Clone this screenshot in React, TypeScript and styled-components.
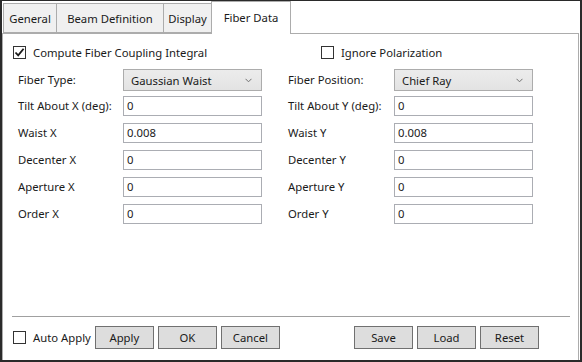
import { FC, Fragment } from "react";
import styled, { createGlobalStyle } from "styled-components";

const GlobalStyle = createGlobalStyle`
    html, body {
        margin: 0;
        padding: 0;
        background: #ffffff;
    }
    * {
        box-sizing: border-box;
    }
`

const Window = styled.div`
    width: 582px;
    height: 362px;
    border: 2px solid #2a2a2a;
    border-top-width: 1px;
    background: #ffffff;
    display: flex;
    flex-direction: column;
    font-family: "Segoe UI", "Noto Sans", sans-serif;
    font-size: 11.3px;
    color: #1a1a1a;
`

const TabStrip = styled.div`
    display: flex;
    align-items: flex-end;
    height: 32px;
    padding-left: 1px;
    position: relative;
    z-index: 1;
`

const Tab = styled.div<{ $w: number; $active?: boolean }>`
    width: ${({ $w }) => $w}px;
    height: ${({ $active }) => ($active ? '33px' : '30px')};
    margin-bottom: ${({ $active }) => ($active ? '-1px' : '0')};
    margin-left: -1px;
    display: flex;
    align-items: center;
    justify-content: center;
    padding-bottom: ${({ $active }) => ($active ? '2px' : '0')};
    border: 1px solid #acacac;
    border-bottom: ${({ $active }) => ($active ? 'none' : '1px solid #acacac')};
    background: ${({ $active }) => ($active ? '#ffffff' : '#f0f0f0')};
    color: #1a1a1a;
    &:first-child {
        margin-left: 0;
    }
`

const Panel = styled.div`
    flex: 1;
    border: 1px solid #acacac;
    border-bottom: none;
    margin-right: 1px;
    display: flex;
    flex-direction: column;
`

const CheckRow = styled.div`
    display: grid;
    grid-template-columns: 308px auto;
    padding: 9px 0 0 10px;
    height: 35px;
`

const CheckItem = styled.label`
    display: flex;
    align-items: center;
    gap: 7px;
    height: 18px;
    white-space: nowrap;
`

const Box = styled.span`
    width: 13px;
    height: 13px;
    border: 1px solid #333333;
    background: #ffffff;
    display: flex;
    align-items: center;
    justify-content: center;
    flex-shrink: 0;
`

const Fields = styled.div`
    display: flex;
    gap: 26px;
    padding-left: 15px;
`

const Column = styled.div<{ $label: number }>`
    display: grid;
    grid-template-columns: ${({ $label }) => $label}px 139px;
    grid-auto-rows: 27px;
    align-items: start;
`

const Label = styled.div<{ $h: number }>`
    height: ${({ $h }) => $h}px;
    line-height: ${({ $h }) => $h}px;
    white-space: nowrap;
`

const Input = styled.div`
    height: 20px;
    border: 1px solid #abadb3;
    background: #ffffff;
    padding-left: 3px;
    line-height: 18px;
`

const Combo = styled.div`
    height: 22px;
    border: 1px solid #acacac;
    background: linear-gradient(#ececec, #e3e3e3);
    padding: 0 9px 0 7px;
    display: flex;
    align-items: center;
    justify-content: space-between;
`

const Spacer = styled.div`
    flex: 1;
`

const Separator = styled.div`
    height: 1px;
    background: #a0a0a0;
    margin: 0 8px 0 9px;
`

const Footer = styled.div`
    display: flex;
    justify-content: space-between;
    align-items: center;
    padding: 9px 39px 11px 10px;
`

const Group = styled.div`
    display: flex;
    align-items: center;
    gap: 4px;
`

const Button = styled.div`
    width: 59px;
    height: 23px;
    flex-shrink: 0;
    border: 1px solid #707070;
    background: #dddddd;
    display: flex;
    align-items: center;
    justify-content: center;
`

const CheckBox: FC<{ checked?: boolean; text: string }> = ({ checked, text }) => (
    <CheckItem>
        <Box>
            {checked && (
                <svg width="11" height="11" viewBox="0 0 11 11">
                    <polyline points="1.5,5.5 4.2,8.4 9.6,1.8" fill="none" stroke="#1a1a1a" strokeWidth="1.8" />
                </svg>
            )}
        </Box>
        {text}
    </CheckItem>
)

const Chevron = () => (
    <svg width="7" height="5" viewBox="0 0 7 5">
        <polyline points="0.5,0.8 3.5,3.8 6.5,0.8" fill="none" stroke="#707070" strokeWidth="1" />
    </svg>
)

const leftRows = [
    ["Tilt About X (deg):", "0"],
    ["Waist X", "0.008"],
    ["Decenter X", "0"],
    ["Aperture X", "0"],
    ["Order X", "0"],
]

const rightRows = [
    ["Tilt About Y (deg):", "0"],
    ["Waist Y", "0.008"],
    ["Decenter Y", "0"],
    ["Aperture Y", "0"],
    ["Order Y", "0"],
]

const App: FC = () => {
    return (
        <>
            <GlobalStyle />
            <Window>
                <TabStrip>
                    <Tab $w={54}>General</Tab>
                    <Tab $w={108}>Beam Definition</Tab>
                    <Tab $w={49}>Display</Tab>
                    <Tab $w={80} $active>Fiber Data</Tab>
                </TabStrip>
                <Panel>
                    <CheckRow>
                        <CheckBox checked text="Compute Fiber Coupling Integral" />
                        <CheckBox text="Ignore Polarization" />
                    </CheckRow>
                    <Fields>
                        <Column $label={105}>
                            <Label $h={22}>Fiber Type:</Label>
                            <Combo>Gaussian Waist<Chevron /></Combo>
                            {leftRows.map(([label, value]) => (
                                <Fragment key={label}>
                                    <Label $h={20}>{label}</Label>
                                    <Input>{value}</Input>
                                </Fragment>
                            ))}
                        </Column>
                        <Column $label={106}>
                            <Label $h={22}>Fiber Position:</Label>
                            <Combo>Chief Ray<Chevron /></Combo>
                            {rightRows.map(([label, value]) => (
                                <Fragment key={label}>
                                    <Label $h={20}>{label}</Label>
                                    <Input>{value}</Input>
                                </Fragment>
                            ))}
                        </Column>
                    </Fields>
                    <Spacer />
                    <Separator />
                    <Footer>
                        <Group>
                            <CheckBox text="Auto Apply" />
                            <Button>Apply</Button>
                            <Button>OK</Button>
                            <Button>Cancel</Button>
                        </Group>
                        <Group>
                            <Button>Save</Button>
                            <Button>Load</Button>
                            <Button>Reset</Button>
                        </Group>
                    </Footer>
                </Panel>
            </Window>
        </>
    )
}

export default App
